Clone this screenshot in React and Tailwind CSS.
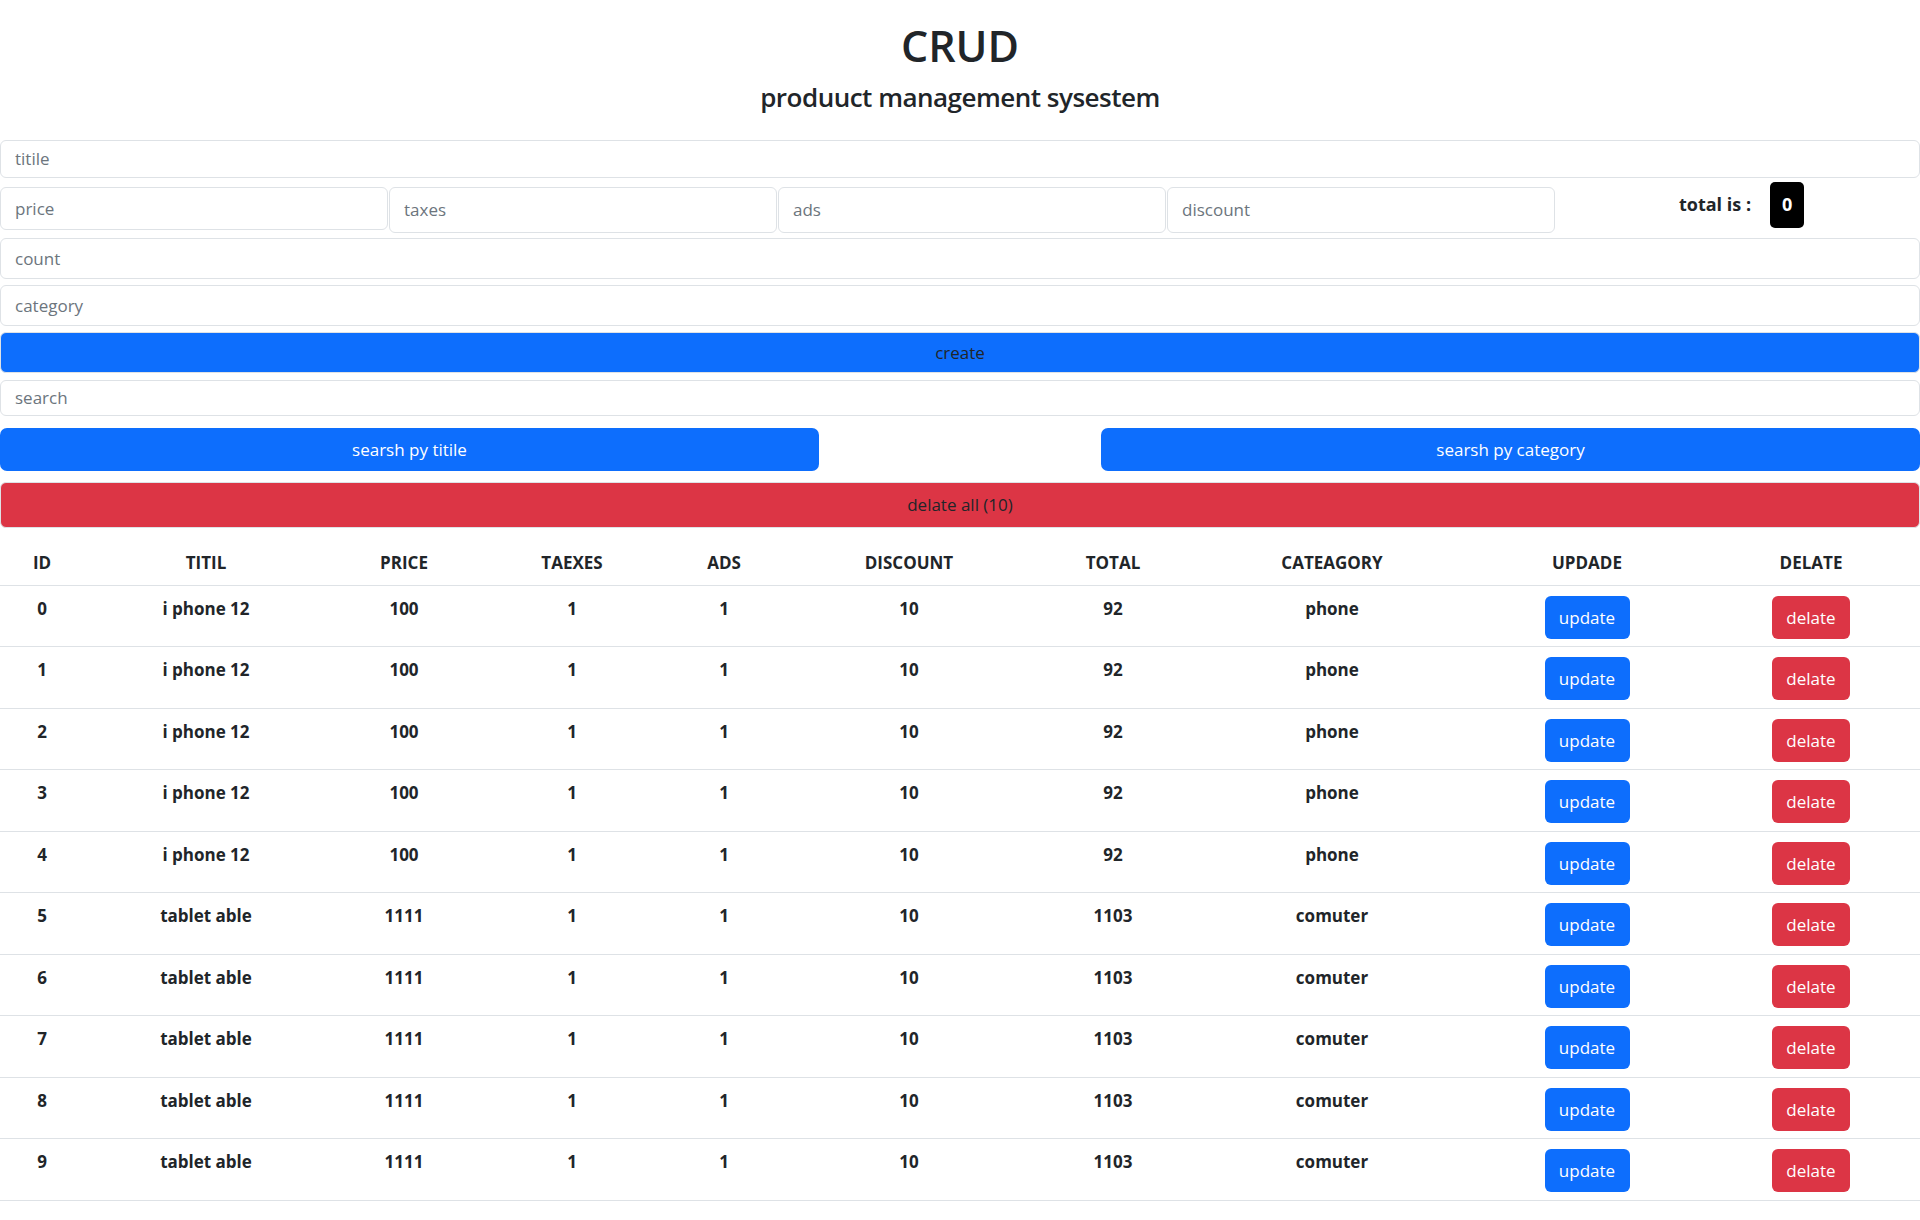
import React from "react";

const rows = [
  ...Array.from({ length: 5 }, (_, i) => ({ id: i, title: "i phone 12", price: 100, total: 92, cat: "phone" })),
  ...Array.from({ length: 5 }, (_, i) => ({ id: i + 5, title: "tablet able", price: 1111, total: 1103, cat: "comuter" })),
];

const GRID = "grid grid-cols-[84px_244px_152px_184px_120px_250px_158px_280px_230px_218px]";

const inputCls =
  "block border border-[#dee2e6] rounded-[6px] px-[14px] text-[17px] text-[#212529] placeholder:text-[#6c757d] outline-none bg-white";

export default function App() {
  return (
    <div className="min-h-screen bg-white text-[#212529] font-['Open_Sans','Noto_Sans',sans-serif]">
      <div className="text-center pt-[20px]">
        <h1 className="text-[43px] font-semibold leading-[1.2]">CRUD</h1>
        <h4 className="mt-[10px] text-[26px] font-semibold leading-[1.2] tracking-[-0.5px]">produuct management sysestem</h4>
      </div>

      <div className="mt-[27px]">
        <input placeholder="titile" className={`${inputCls} w-full h-[38px]`} />

        <div className="mt-[9px] flex items-start">
          <input placeholder="price" className={`${inputCls} w-[388px] h-[43px]`} />
          <input placeholder="taxes" className={`${inputCls} w-[388px] h-[46px] ml-px`} />
          <input placeholder="ads" className={`${inputCls} w-[388px] h-[46px] ml-px`} />
          <input placeholder="discount" className={`${inputCls} w-[388px] h-[46px] ml-px`} />
          <div className="flex-1 flex justify-center items-center gap-[19px] -mt-[5px] h-[46px] pl-[8px]">
            <span className="font-bold text-[18px]">total is :</span>
            <span className="bg-black text-white font-bold text-[18px] w-[34px] h-[46px] rounded-[5px] flex items-center justify-center">
              0
            </span>
          </div>
        </div>

        <input placeholder="count" className={`${inputCls} w-full h-[41px] mt-[5px]`} />
        <input placeholder="category" className={`${inputCls} w-full h-[41px] mt-[6px]`} />
        <button className="mt-[6px] w-full h-[41px] bg-[#0d6efd] border border-[#dee2e6] rounded-[6px] text-[17px] text-[#212529]">
          create
        </button>
        <input placeholder="search" className={`${inputCls} w-full h-[36px] mt-[7px]`} />

        <div className="mt-[12px] flex justify-between">
          <button className="w-[819px] h-[43px] bg-[#0d6efd] rounded-[7px] text-white text-[17px]">searsh py titile</button>
          <button className="w-[819px] h-[43px] bg-[#0d6efd] rounded-[7px] text-white text-[17px]">searsh py category</button>
        </div>

        <button className="mt-[11px] w-full h-[46px] bg-[#dc3545] border border-[#dee2e6] rounded-[6px] text-[17px] text-[#212529]">
          delate all (10)
        </button>
      </div>

      <div className="mt-[12px] text-[17px]">
        <div className={`${GRID} h-[46px] items-center border-b border-[#dee2e6] font-bold text-center`}>
          <div>ID</div>
          <div>TITIL</div>
          <div>PRICE</div>
          <div>TAEXES</div>
          <div>ADS</div>
          <div>DISCOUNT</div>
          <div>TOTAL</div>
          <div>CATEAGORY</div>
          <div>UPDADE</div>
          <div>DELATE</div>
        </div>
        {rows.map((r) => (
          <div
            key={r.id}
            className={`${GRID} h-[61.5px] items-start pt-[10px] border-b border-[#dee2e6] font-bold text-center leading-[25.5px]`}
          >
            <div>{r.id}</div>
            <div>{r.title}</div>
            <div>{r.price}</div>
            <div>1</div>
            <div>1</div>
            <div>10</div>
            <div>{r.total}</div>
            <div>{r.cat}</div>
            <div className="flex justify-center">
              <button className="w-[85px] h-[43px] rounded-[6px] bg-[#0d6efd] text-white font-normal text-[17px]">update</button>
            </div>
            <div className="flex justify-center">
              <button className="w-[78px] h-[43px] rounded-[6px] bg-[#dc3545] text-white font-normal text-[17px]">delate</button>
            </div>
          </div>
        ))}
      </div>
    </div>
  );
}
